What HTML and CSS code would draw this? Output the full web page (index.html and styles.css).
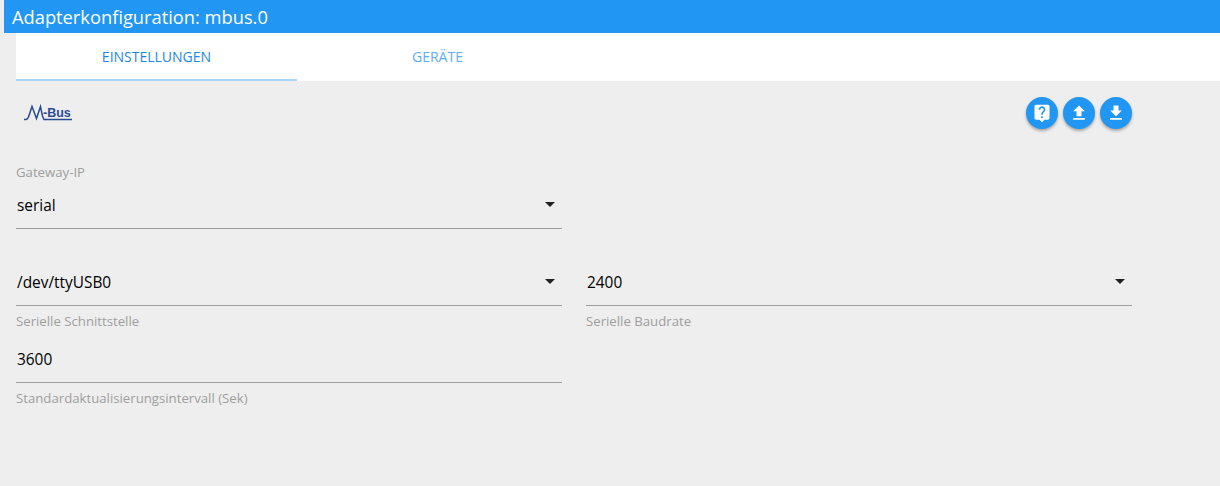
FILE: index.html
```html
<!DOCTYPE html>
<html lang="de">
<head>
    <meta charset="UTF-8">
    <title>Adapterkonfiguration: mbus.0</title>
    <link rel="stylesheet" href="styles.css">
</head>
<body>
    <header class="app-title">Adapterkonfiguration: mbus.0</header>
    <nav class="tabs">
        <div class="tab tab-active">EINSTELLUNGEN</div>
        <div class="tab">GERÄTE</div>
    </nav>
    <main class="settings">
        <div class="toolbar">
            <svg class="logo" width="50" height="22" viewBox="0 0 50 22">
                <path d="M0 18.500C3 18.500 4 18 5 14.500L8 5.500L12.500 17.500L16.500 5.500C17.500 10 18 15.500 20 18.500H48" fill="none" stroke="#2b4a94" stroke-width="1.500"/>
                <text x="19" y="16" class="logo-text">-Bus</text>
            </svg>
            <div class="actions">
                <button class="fab" type="button">
                    <svg width="24" height="24" viewBox="0 0 24 24"><path fill="#fff" d="M19 2H5c-1.110 0-2 .9-2 2v14c0 1.100.89 2 2 2h4l3 3 3-3h4c1.100 0 2-.9 2-2V4c0-1.100-.9-2-2-2zm-6 16h-2v-2h2v2zm2.070-7.750l-.9.920C13.450 11.900 13 12.500 13 14h-2v-.5c0-1.100.45-2.100 1.170-2.830l1.240-1.260c.37-.36.59-.86.59-1.410 0-1.100-.9-2-2-2s-2 .9-2 2H8c0-2.210 1.790-4 4-4s4 1.790 4 4c0 .88-.36 1.680-.93 2.250z"/></svg>
                </button>
                <button class="fab" type="button">
                    <svg width="24" height="24" viewBox="0 0 24 24"><path fill="#fff" d="M9 16h6v-6h4l-7-7-7 7h4zm-4 2h14v2H5z"/></svg>
                </button>
                <button class="fab" type="button">
                    <svg width="24" height="24" viewBox="0 0 24 24"><path fill="#fff" d="M19 9h-4V3H9v6H5l7 7zM5 18v2h14v-2z"/></svg>
                </button>
            </div>
        </div>

        <div class="form-row row-gateway">
            <div class="field">
                <label class="field-label label-top">Gateway-IP</label>
                <div class="field-input">serial<span class="caret"></span></div>
            </div>
        </div>

        <div class="form-row row-serial">
            <div class="field">
                <div class="field-input">/dev/ttyUSB0<span class="caret"></span></div>
                <label class="field-label label-bottom">Serielle Schnittstelle</label>
            </div>
            <div class="field">
                <div class="field-input">2400<span class="caret"></span></div>
                <label class="field-label label-bottom">Serielle Baudrate</label>
            </div>
        </div>

        <div class="form-row row-interval">
            <div class="field">
                <div class="field-input">3600</div>
                <label class="field-label label-bottom">Standardaktualisierungsintervall (Sek)</label>
            </div>
        </div>
    </main>
</body>
</html>
```

FILE: styles.css
```css
body {
    font-family: 'Open Sans', 'Noto Sans', Arial, sans-serif;
    background: #eeeeee;
    margin: 0;
    padding: 0 0 0 4px;
    height: 486px;
    overflow: hidden;
    box-sizing: border-box;
}
.app-title {
    height: 33px;
    line-height: 33px;
    padding-left: 8px;
    background: #2196f3;
    color: #fff;
    font-size: 18.300px;
}
.tabs {
    display: flex;
    height: 48px;
    margin-left: 12px;
    background: #fff;
}
.tab {
    width: 281px;
    height: 48px;
    line-height: 48px;
    box-sizing: border-box;
    text-align: center;
    font-size: 14px;
    font-weight: 500;
    color: #5aaef5;
}
.tab-active {
    color: #1a88e6;
    border-bottom: 2px solid #a6d5fa;
}
.settings {
    width: 1116px;
    margin-left: 12px;
}
.toolbar {
    display: flex;
    justify-content: space-between;
    height: 32px;
    padding-top: 16px;
}
.logo {
    margin: 4px 0 0 8px;
}
.logo-text {
    font-family: 'Liberation Sans', Arial, sans-serif;
    font-size: 12.500px;
    font-weight: 700;
    fill: #2b4a94;
}
.actions {
    display: flex;
    gap: 5px;
}
.fab {
    width: 32px;
    height: 32px;
    padding: 0;
    border: none;
    border-radius: 50%;
    background: #2196f3;
    display: flex;
    align-items: center;
    justify-content: center;
    box-shadow: 0 2px 3px rgba(0, 0, 0, 0.3);
}
.fab svg {
    width: 20px;
    height: 20px;
}
.form-row {
    display: flex;
    gap: 24px;
}
.row-gateway {
    margin-top: 35px;
}
.row-serial {
    margin-top: 35px;
}
.row-interval {
    margin-top: 12px;
}
.field {
    width: 546px;
}
.field-label {
    display: block;
    font-size: 13.200px;
    line-height: 16px;
    color: #9e9e9e;
}
.label-top {
    margin-bottom: 7px;
}
.label-bottom {
    margin-top: 7px;
}
.field-input {
    display: flex;
    justify-content: space-between;
    align-items: center;
    height: 42px;
    padding: 0 7px 4px 1px;
    box-sizing: border-box;
    border-bottom: 1px solid #9e9e9e;
    font-size: 15.400px;
    color: #000;
}
.caret {
    width: 0;
    height: 0;
    margin-top: -3px;
    border-left: 5px solid transparent;
    border-right: 5px solid transparent;
    border-top: 5px solid #222;
}
```
